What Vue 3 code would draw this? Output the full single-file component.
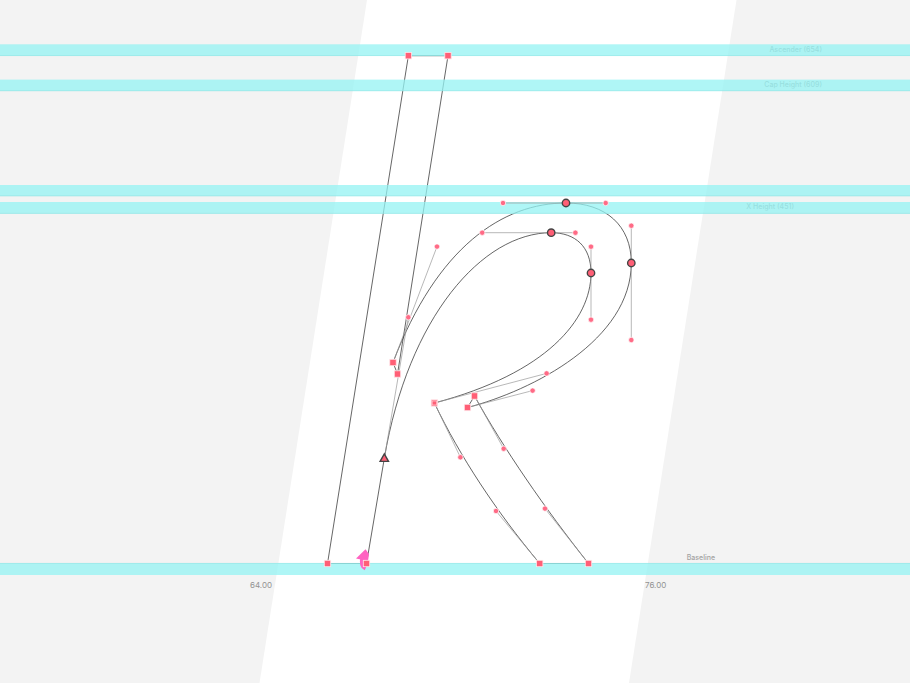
<template>
  <main class="editor">
    <svg class="canvas" viewBox="0 0 910 683" role="img" aria-label="Glyph outline">
      <polygon class="glyph-box" points="367,0 736.5,0 629,683 259.5,683" />

      <text
        v-for="label in labels"
        :key="label.text"
        :class="['label', label.type]"
        :x="label.x"
        :y="label.y"
        :text-anchor="label.anchor"
      >{{ label.text }}</text>

      <path class="outline" :d="outline" />

      <g v-for="zone in zones" :key="zone.y">
        <rect class="zone" x="0" :y="zone.y" width="910" :height="zone.height" />
        <line class="zone-edge" x1="0" x2="910" :y1="zone.edge" :y2="zone.edge" />
      </g>

      <line
        v-for="(h, i) in handles"
        :key="'line' + i"
        class="handle-line"
        :x1="h[0]"
        :y1="h[1]"
        :x2="h[2]"
        :y2="h[3]"
      />
      <circle
        v-for="(h, i) in handles"
        :key="'dot' + i"
        class="handle"
        :cx="h[2]"
        :cy="h[3]"
        r="2.7"
      />

      <!-- start point direction -->
      <path class="arrow-tail" d="M362.5 557 C361 563 362 567 365.5 568.5" />
      <path class="arrow-head" d="M365.5 549.3 L356 558.5 L368 561 L369 554 Z" />

      <rect
        v-for="(c, i) in corners"
        :key="'corner' + i"
        class="corner"
        :x="c[0] - 3.2"
        :y="c[1] - 3.2"
        width="6.4"
        height="6.4"
      />
      <rect class="corner-inner" x="432.2" y="401" width="4.4" height="4" />
      <circle
        v-for="(s, i) in smooth"
        :key="'smooth' + i"
        class="smooth"
        :cx="s[0]"
        :cy="s[1]"
        r="3.7"
      />
      <path class="smooth" d="M384.3 453.9 L388.5 461.4 L380.1 461.4 Z" />
    </svg>
  </main>
</template>

<script setup>
const zones = [
  { y: 44.3, height: 11.7, edge: 55.6 },
  { y: 79.6, height: 11.5, edge: 90.7 },
  { y: 185, height: 11.2, edge: 195.8 },
  { y: 202, height: 11.8, edge: 213.4 },
  { y: 563, height: 12, edge: 563.4 }
]

const labels = [
  { text: 'Ascender (654)', x: 822, y: 52, anchor: 'end', type: 'metric' },
  { text: 'Cap Height (609)', x: 822, y: 87, anchor: 'end', type: 'metric' },
  { text: 'X Height (451)', x: 794, y: 209, anchor: 'end', type: 'metric' },
  { text: 'Baseline', x: 715, y: 560, anchor: 'end', type: 'metric' },
  { text: '64.00', x: 272, y: 588, anchor: 'end', type: 'bearing' },
  { text: '76.00', x: 645, y: 588, anchor: 'start', type: 'bearing' }
]

const outline = [
  'M327.5 563.5 L408.4 55.7 L448 55.7 L397.5 374 L393 362.5',
  'C437 246.6 503 203 566 203',
  'C605.7 203 631.3 225.7 631.3 263',
  'C631.3 340 532.6 390.6 467.5 407.5',
  'L474.5 396',
  'C503.7 448.7 545 508.6 588.5 563.5',
  'L539.7 563.5',
  'C496 511 460.4 457.3 434.4 403',
  'C546.6 373.4 591 319.7 591 273',
  'C591 246.7 575.4 232.7 551.2 232.7',
  'C482.2 232.7 408.3 317.3 384.3 458.4',
  'L366.5 563.5 Z'
].join(' ')

// node x, node y, handle x, handle y
const handles = [
  [393, 362.5, 437, 246.6],
  [566, 203, 503, 203],
  [566, 203, 605.7, 203],
  [631.3, 263, 631.3, 225.7],
  [631.3, 263, 631.3, 340],
  [467.5, 407.5, 532.6, 390.6],
  [474.5, 396, 503.7, 448.7],
  [588.5, 563.5, 545, 508.6],
  [539.7, 563.5, 496, 511],
  [434.4, 403, 460.4, 457.3],
  [434.4, 403, 546.6, 373.4],
  [591, 273, 591, 319.7],
  [591, 273, 591, 246.7],
  [551.2, 232.7, 575.4, 232.7],
  [551.2, 232.7, 482.2, 232.7],
  [384.3, 458.4, 408.3, 317.3]
]

const corners = [
  [408.4, 55.7],
  [448, 55.7],
  [393, 362.5],
  [397.5, 374],
  [467.5, 407.5],
  [474.5, 396],
  [434.4, 403],
  [327.5, 563.5],
  [366.5, 563.5],
  [539.7, 563.5],
  [588.5, 563.5]
]

const smooth = [
  [566, 203],
  [551.2, 232.7],
  [631.3, 263],
  [591, 273]
]
</script>

<style>
body {
  margin: 0;
  background: #f3f3f3;
}
</style>

<style scoped>
.editor {
  background: #f3f3f3;
}
.canvas {
  display: block;
  width: 100%;
  height: auto;
}
.glyph-box {
  fill: #fff;
}
.label {
  font-family: Inter, "Liberation Sans", sans-serif;
}
.metric {
  font-size: 7px;
  font-weight: 500;
  fill: #a2a2a2;
}
.bearing {
  font-size: 8px;
  fill: #929292;
}
.outline {
  fill: none;
  stroke: #333;
  stroke-width: .75;
}
.zone {
  fill: #94f3f3;
  fill-opacity: .75;
}
.zone-edge {
  stroke: #8cdede;
  stroke-width: .4;
}
.handle-line {
  stroke: #999;
  stroke-width: .7;
}
.handle {
  fill: #ff6b86;
  stroke: #fff;
  stroke-width: .7;
}
.corner {
  fill: #ff5f76;
  stroke: #ffe4e8;
  stroke-width: .8;
}
.corner-inner {
  fill: #ff5f76;
  stroke: #ffc4cc;
  stroke-width: .8;
}
.smooth {
  fill: #ff5f76;
  stroke: #444;
  stroke-width: 1.4;
}
.arrow-tail {
  fill: none;
  stroke: #ff63c1;
  stroke-width: 4;
}
.arrow-head {
  fill: #ff63c1;
}
</style>
